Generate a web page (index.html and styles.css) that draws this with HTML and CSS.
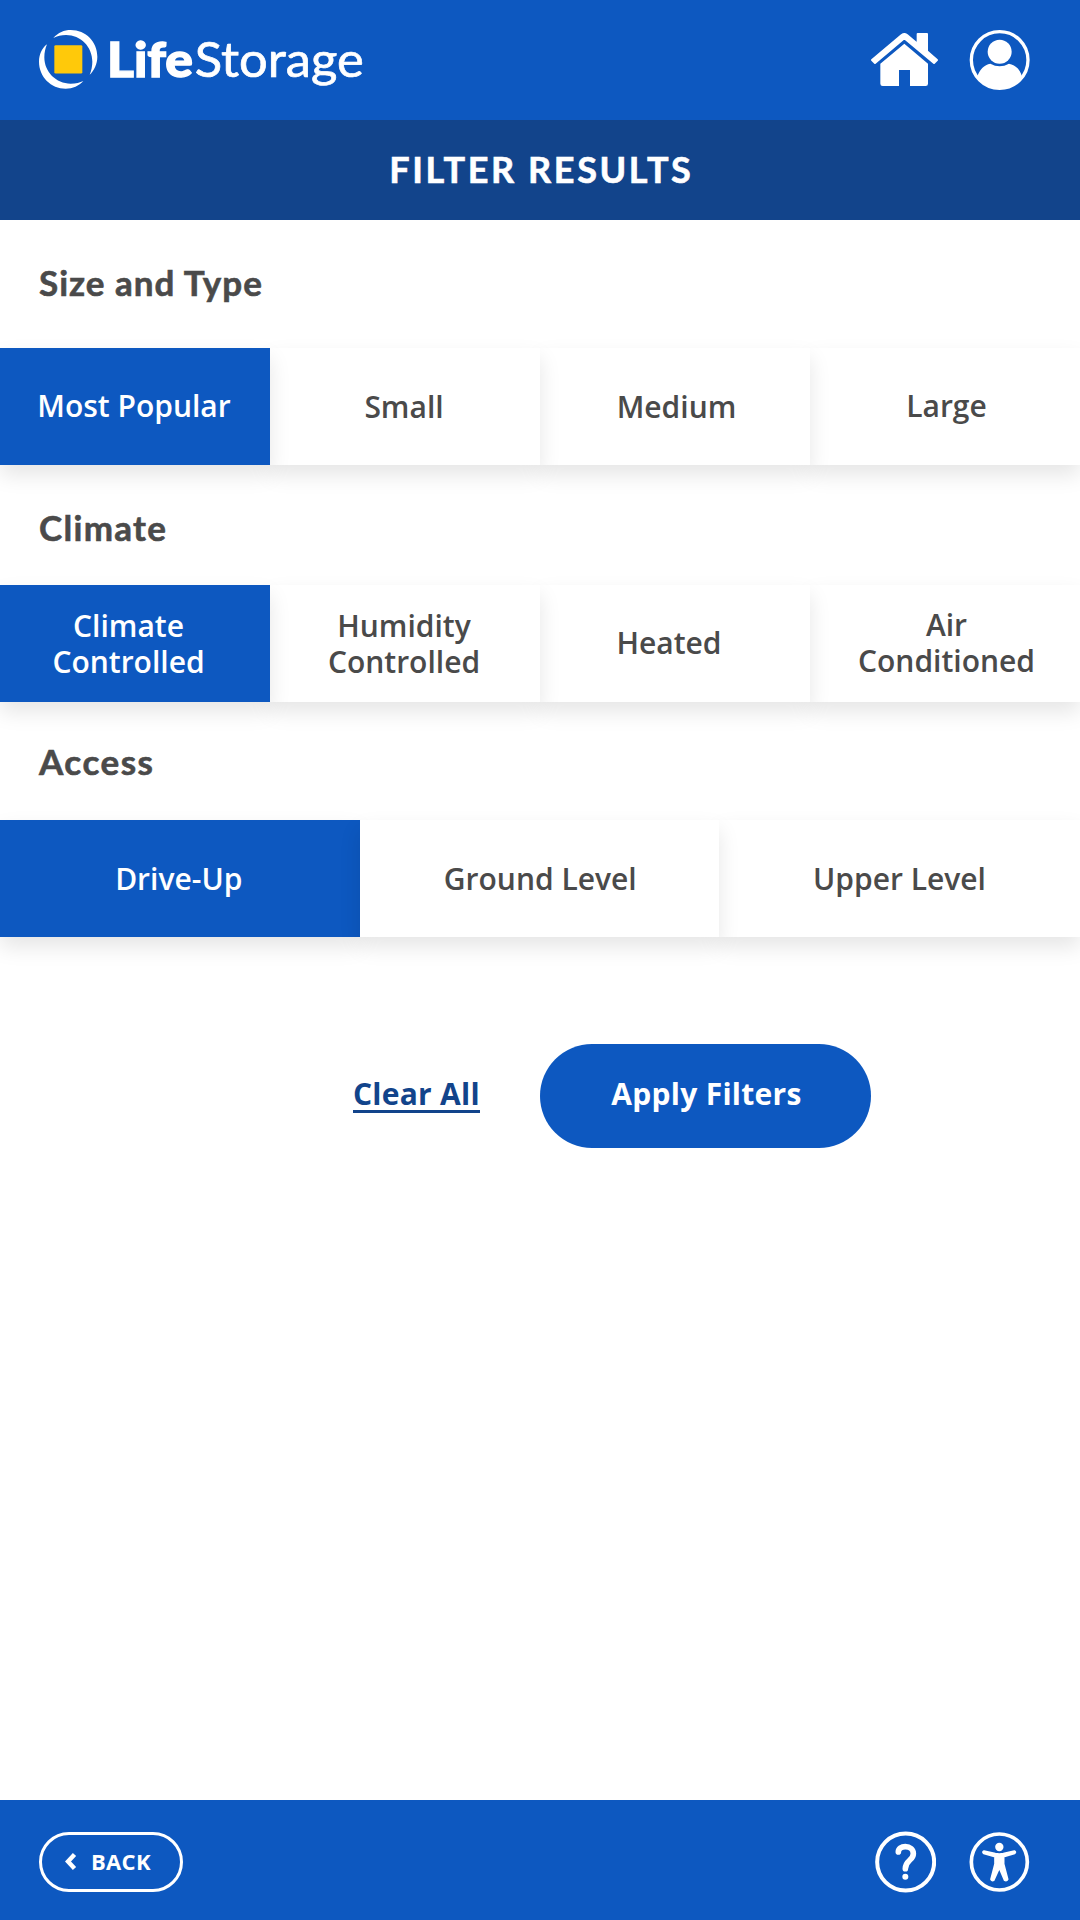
FILE: index.html
```html
<!DOCTYPE html>
<html lang="en">
<head>
<meta charset="utf-8">
<title>Life Storage – Filter Results</title>
<link rel="stylesheet" href="styles.css">
</head>
<body>
<header class="topbar">
  <svg class="logo" viewBox="57 60 972 180" role="img" aria-label="Life Storage">
    <path fill="#fff" d="M100 84C115 68 132 60 152 60C198 60 232 96 232 140C232 162 222 182 209 194C214 182 217 168 217 155C217 110 182 75 138 75C124 75 111 78 100 84Z"/>
    <path fill="#fff" d="M81 103C65 115 57 135 57 155C57 200 93 236 137 236C158 236 177 228 190 213C180 218 168 221 152 221C108 221 73 186 73 142C73 128 76 114 81 103Z"/>
    <rect x="103" y="105.500" width="84" height="85" rx="4" fill="#ffc90a"/>
    <text class="logo-bold" x="261" y="201" textLength="258" lengthAdjust="spacingAndGlyphs">Life</text>
    <text class="logo-light" x="524" y="201" textLength="507" lengthAdjust="spacingAndGlyphs">Storage</text>
  </svg>
  <nav class="actions">
    <svg class="icon-home" viewBox="60 60 210 180" role="img" aria-label="Home">
      <path fill="#fff" stroke="#fff" stroke-width="6" stroke-linejoin="round" d="M66 150L155 75Q163 69 171 75L203 102V72H231V124L261 150L252 159L163 85L75 159Z"/>
      <path fill="#fff" d="M163 101L234 161V221Q234 228 227 228H180V180H147V228H98Q91 228 91 221V161Z"/>
    </svg>
    <svg class="icon-round" viewBox="356 57 184 184" role="img" aria-label="Account">
      <circle cx="448" cy="150" r="85" fill="none" stroke="#fff" stroke-width="10"/>
      <circle cx="448" cy="125" r="36" fill="#fff"/>
      <path fill="#fff" d="M380 203C387 178 402 164 420 161Q448 176 476 161C495 164 510 178 516 203A86 86 0 0 1 380 203Z"/>
    </svg>
  </nav>
</header>
<h1 class="title">FILTER RESULTS</h1>
<main class="filters">
  <h2 class="heading heading-size">Size and Type</h2>
  <div class="options">
    <button class="option selected most">Most Popular</button>
    <button class="option lower small">Small</button>
    <button class="option lower medium">Medium</button>
    <button class="option large">Large</button>
  </div>
  <h2 class="heading heading-climate">Climate</h2>
  <div class="options">
    <button class="option selected lower narrow">Climate<br>Controlled</button>
    <button class="option lower small">Humidity<br>Controlled</button>
    <button class="option heated">Heated</button>
    <button class="option large">Air<br>Conditioned</button>
  </div>
  <h2 class="heading heading-access">Access</h2>
  <div class="options three">
    <button class="option selected lower drive">Drive-Up</button>
    <button class="option lower ground">Ground Level</button>
    <button class="option lower">Upper Level</button>
  </div>
  <div class="submit">
    <a class="clear" href="#">Clear All</a>
    <button class="apply">Apply Filters</button>
  </div>
</main>
<footer class="bottombar">
  <button class="back">
    <svg class="chevron" viewBox="0 0 12 18"><path fill="none" stroke="#fff" stroke-width="4.400" d="M9.500 2.500L3 9.500L9.500 16.500"/></svg>
    BACK
  </button>
  <nav class="help">
    <svg class="icon-round" viewBox="74 154 184 184" role="img" aria-label="Help">
      <g fill="none" stroke="#fff">
        <circle cx="166" cy="247" r="85.500" stroke-width="12"/>
        <path stroke-width="17" stroke-linecap="round" d="M144 217C144 207 153 201 165 201C179 201 189 210 189 222C189 243 165 241 165 267"/>
      </g>
      <circle cx="165" cy="291" r="9" fill="#fff"/>
    </svg>
    <svg class="icon-round" viewBox="357 153 184 184" role="img" aria-label="Accessibility">
      <circle cx="448" cy="246" r="84" fill="none" stroke="#fff" stroke-width="11"/>
      <circle cx="448" cy="201" r="12.500" fill="#fff"/>
      <path fill="#fff" stroke="#fff" stroke-width="5" stroke-linejoin="round" d="M402 213L436 221Q448 223 460 221L493 213Q499 216 494 220L461 230V252L473 298Q470 304 464 301L448 264L431 301Q426 304 423 298L435 252V230L401 220Q396 216 402 213Z"/>
    </svg>
  </nav>
</footer>
</body>
</html>
```
FILE: styles.css
```css
* { box-sizing: border-box; }
body {
  margin: 0;
  height: 1920px;
  display: flex;
  flex-direction: column;
  background: #fff;
  color: #4a4a4a;
  font-family: "Open Sans", sans-serif;
}
button { font-family: inherit; border: 0; padding: 0; }
.topbar, .bottombar {
  height: 120px;
  flex: none;
  display: flex;
  justify-content: space-between;
  background: #0d58c0;
}
.topbar { padding: 30px 50px 0 39px; }
.logo { width: 324px; height: 60px; overflow: visible; }
.logo text { fill: #fff; stroke: #fff; font-family: Lato, sans-serif; }
.logo-bold { font-size: 143px; font-weight: 900; stroke-width: 4px; }
.logo-light { font-size: 143px; font-weight: 400; stroke-width: 2px; }
.actions { display: flex; gap: 28.670px; }
.icon-home { width: 70px; height: 60px; }
.icon-round { width: 61.330px; height: 61.330px; margin-top: -.670px; }
.title {
  margin: 0;
  height: 100px;
  flex: none;
  background: #12448b;
  color: #fff;
  font: 700 36px/98px Lato, sans-serif;
  letter-spacing: 2.600px;
  text-indent: 2.600px;
  text-align: center;
  -webkit-text-stroke: .6px;
}
.filters { flex: 1; }
.heading {
  margin: 0;
  padding-left: 39px;
  font: 700 35px/40px Lato, sans-serif;
  letter-spacing: 1px;
  -webkit-text-stroke: .6px;
}
.heading-size { padding-top: 42px; height: 128px; }
.heading-climate { padding-top: 42px; height: 120px; letter-spacing: 1.300px; }
.heading-access { padding-top: 39px; height: 118px; letter-spacing: 1.500px; }
.options { height: 117px; display: grid; grid-template-columns: repeat(4, 1fr); }
.options.three { grid-template-columns: 359.500px 359.500px 361px; }
.option {
  position: relative;
  z-index: 1;
  padding-bottom: 2px;
  background: #fff;
  color: #4a4a4a;
  font-size: 30px;
  font-weight: 600;
  line-height: 36px;
  box-shadow: 0 10px 20px rgba(0, 0, 0, .1);
}
.option:nth-child(1) { z-index: 4; }
.option:nth-child(2) { z-index: 3; }
.option:nth-child(3) { z-index: 2; }
.three .option:nth-child(1) { z-index: 1; }
.option.selected { background: #0d58c0; color: #fff; }
.option.lower { padding-bottom: 0; }
.most, .small, .drive { padding-right: 2px; }
.medium { padding-left: 3px; }
.large { padding-left: 3px; }
.ground { padding-left: 2px; }
.narrow { padding-right: 13px; }
.heated { padding-right: 12px; }
.submit { display: flex; padding: 107px 0 0 353px; }
.clear {
  width: 127px;
  height: 69px;
  margin-right: 60px;
  padding-top: 30px;
  border-bottom: 3px solid #12448b;
  color: #12448b;
  font-size: 30px;
  font-weight: 700;
  line-height: 40px;
  letter-spacing: .250px;
  text-decoration: none;
  white-space: nowrap;
}
.apply {
  width: 331px;
  height: 104px;
  padding: 0 0 5px 2px;
  border-radius: 52px;
  background: #0d58c0;
  color: #fff;
  font-size: 30px;
  font-weight: 700;
  letter-spacing: .280px;
}
.bottombar { padding: 32px 50px 0 39px; }
.back {
  width: 144px;
  height: 60px;
  padding: 0 0 2px 23px;
  display: flex;
  align-items: center;
  gap: 14px;
  border: 3px solid #fff;
  border-radius: 30px;
  background: none;
  color: #fff;
  font-size: 22px;
  font-weight: 700;
  letter-spacing: .300px;
}
.chevron { width: 12px; height: 18px; }
.help { display: flex; gap: 32.670px; }
```
